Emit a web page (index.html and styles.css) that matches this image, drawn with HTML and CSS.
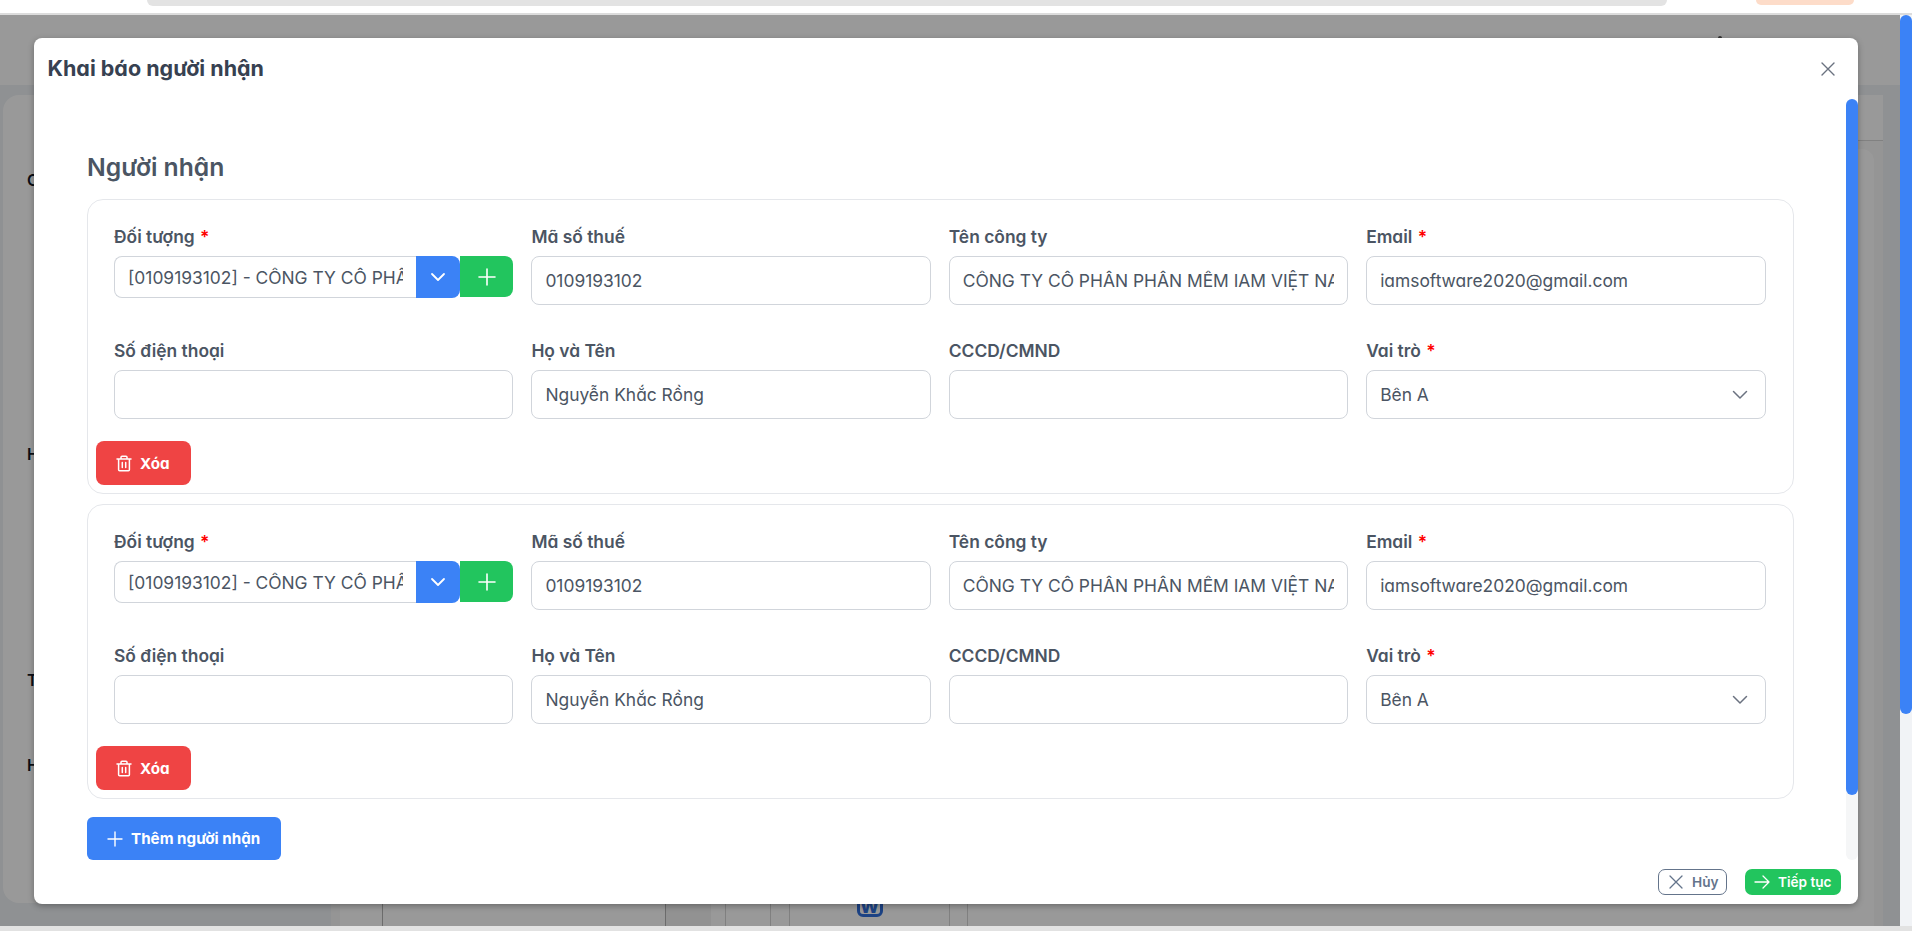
FILE: index.html
```html
<!DOCTYPE html>
<html lang="vi">
<head>
<meta charset="utf-8">
<title>Khai báo người nhận</title>
<link rel="stylesheet" href="styles.css">
</head>
<body>
<div class="topbar">
  <div class="top-pill"></div>
  <div class="top-action"></div>
</div>
<div class="viewport">
  <div class="scroller">
    <div class="page">
      <div class="page-header"><span class="header-dot"></span></div>
      <div class="page-grid">
        <aside class="side-card">
          <div class="side-label side-first">Công ty</div>
          <div class="side-label side-second">Họ tên</div>
          <div class="side-label side-third">Tên</div>
          <div class="side-label side-fourth">Hạn</div>
        </aside>
        <section class="doc-panel">
          <div class="doc-tabs"></div>
          <div class="doc-card">
            <div class="doc-row">
              <div class="cell c1"></div>
              <div class="cell c2"></div>
              <div class="cell c3"></div>
              <div class="cell c4"></div>
              <div class="cell c5"></div>
              <div class="cell c6"><span class="word-icon">W</span></div>
              <div class="cell c7"></div>
            </div>
          </div>
        </section>
      </div>
    </div>
  </div>
  <div class="scroll-track page-track"><div class="scroll-thumb page-thumb"></div></div>
  <div class="overlay">
    <div class="modal">
      <header class="modal-head">
        <h2 class="modal-title">Khai báo người nhận</h2>
        <button class="close-btn" type="button" aria-label="Đóng">
          <svg width="16" height="16" viewBox="0 0 16 16" fill="none" stroke="currentColor" stroke-width="1.4" stroke-linecap="round"><path d="M2 2l12 12M14 2L2 14"/></svg>
        </button>
      </header>
      <div class="modal-body">
        <h3 class="section-title">Người nhận</h3>

        <div class="card">
          <div class="fields">
            <div class="field">
              <label class="label">Đối tượng <span class="req">*</span></label>
              <div class="combo">
                <input class="combo-input" type="text" value="[0109193102] - CÔNG TY CỔ PHẦN PHẦN MỀM IAM VIỆT NAM">
                <button class="combo-toggle" type="button" aria-label="Chọn">
                  <svg width="16" height="16" viewBox="0 0 16 16" fill="none" stroke="currentColor" stroke-width="1.8" stroke-linecap="round" stroke-linejoin="round"><path d="M2 5l6 6 6-6"/></svg>
                </button>
                <button class="combo-add" type="button" aria-label="Thêm">
                  <svg width="18" height="18" viewBox="0 0 18 18" fill="none" stroke="currentColor" stroke-width="1.6" stroke-linecap="round"><path d="M9 1v16M1 9h16"/></svg>
                </button>
              </div>
            </div>
            <div class="field"><label class="label">Mã số thuế</label><input class="input" type="text" value="0109193102"></div>
            <div class="field"><label class="label">Tên công ty</label><input class="input" type="text" value="CÔNG TY CỔ PHẦN PHẦN MỀM IAM VIỆT NAM"></div>
            <div class="field"><label class="label">Email <span class="req">*</span></label><input class="input" type="text" value="iamsoftware2020@gmail.com"></div>
            <div class="field"><label class="label">Số điện thoại</label><input class="input" type="text" value=""></div>
            <div class="field"><label class="label">Họ và Tên</label><input class="input" type="text" value="Nguyễn Khắc Rồng"></div>
            <div class="field"><label class="label">CCCD/CMND</label><input class="input" type="text" value=""></div>
            <div class="field">
              <label class="label">Vai trò <span class="req">*</span></label>
              <div class="select"><span>Bên A</span>
                <svg width="16" height="16" viewBox="0 0 16 16" fill="none" stroke="currentColor" stroke-width="1.5" stroke-linecap="round" stroke-linejoin="round"><path d="M1.5 4.500L8 11l6.500-6.500"/></svg>
              </div>
            </div>
          </div>
          <button class="btn btn-delete" type="button">
            <svg width="16" height="17" viewBox="0 0 16 17" fill="none" stroke="currentColor" stroke-width="1.5" stroke-linecap="round" stroke-linejoin="round"><path d="M1 4h14M5 4V2.200A1 1 0 0 1 6 1.200h4a1 1 0 0 1 1 1V4M2.600 4v10.800a1 1 0 0 0 1 1h8.800a1 1 0 0 0 1-1V4M6.300 7.500v5M9.700 7.500v5"/></svg>
            Xóa
          </button>
        </div>

        <div class="card">
          <div class="fields">
            <div class="field">
              <label class="label">Đối tượng <span class="req">*</span></label>
              <div class="combo">
                <input class="combo-input" type="text" value="[0109193102] - CÔNG TY CỔ PHẦN PHẦN MỀM IAM VIỆT NAM">
                <button class="combo-toggle" type="button" aria-label="Chọn">
                  <svg width="16" height="16" viewBox="0 0 16 16" fill="none" stroke="currentColor" stroke-width="1.8" stroke-linecap="round" stroke-linejoin="round"><path d="M2 5l6 6 6-6"/></svg>
                </button>
                <button class="combo-add" type="button" aria-label="Thêm">
                  <svg width="18" height="18" viewBox="0 0 18 18" fill="none" stroke="currentColor" stroke-width="1.6" stroke-linecap="round"><path d="M9 1v16M1 9h16"/></svg>
                </button>
              </div>
            </div>
            <div class="field"><label class="label">Mã số thuế</label><input class="input" type="text" value="0109193102"></div>
            <div class="field"><label class="label">Tên công ty</label><input class="input" type="text" value="CÔNG TY CỔ PHẦN PHẦN MỀM IAM VIỆT NAM"></div>
            <div class="field"><label class="label">Email <span class="req">*</span></label><input class="input" type="text" value="iamsoftware2020@gmail.com"></div>
            <div class="field"><label class="label">Số điện thoại</label><input class="input" type="text" value=""></div>
            <div class="field"><label class="label">Họ và Tên</label><input class="input" type="text" value="Nguyễn Khắc Rồng"></div>
            <div class="field"><label class="label">CCCD/CMND</label><input class="input" type="text" value=""></div>
            <div class="field">
              <label class="label">Vai trò <span class="req">*</span></label>
              <div class="select"><span>Bên A</span>
                <svg width="16" height="16" viewBox="0 0 16 16" fill="none" stroke="currentColor" stroke-width="1.5" stroke-linecap="round" stroke-linejoin="round"><path d="M1.5 4.500L8 11l6.500-6.500"/></svg>
              </div>
            </div>
          </div>
          <button class="btn btn-delete" type="button">
            <svg width="16" height="17" viewBox="0 0 16 17" fill="none" stroke="currentColor" stroke-width="1.5" stroke-linecap="round" stroke-linejoin="round"><path d="M1 4h14M5 4V2.200A1 1 0 0 1 6 1.200h4a1 1 0 0 1 1 1V4M2.600 4v10.800a1 1 0 0 0 1 1h8.800a1 1 0 0 0 1-1V4M6.300 7.500v5M9.700 7.500v5"/></svg>
            Xóa
          </button>
        </div>

        <button class="btn btn-add" type="button">
          <svg width="16" height="16" viewBox="0 0 16 16" fill="none" stroke="currentColor" stroke-width="1.4" stroke-linecap="round"><path d="M8 1v14M1 8h14"/></svg>
          Thêm người nhận
        </button>
      </div>
      <footer class="modal-foot">
        <button class="btn-sm btn-cancel" type="button">
          <svg width="14" height="14" viewBox="0 0 14 14" fill="none" stroke="currentColor" stroke-width="1.3" stroke-linecap="round"><path d="M1 1l12 12M13 1L1 13"/></svg>
          Hủy
        </button>
        <button class="btn-sm btn-next" type="button">
          <svg width="16" height="14" viewBox="0 0 16 14" fill="none" stroke="currentColor" stroke-width="1.3" stroke-linecap="round" stroke-linejoin="round"><path d="M1 7h14M9 1l6 6-6 6"/></svg>
          Tiếp tục
        </button>
      </footer>
      <div class="scroll-track modal-track"><div class="scroll-thumb modal-thumb"></div></div>
    </div>
  </div>
</div>
<div class="bottom-strip"></div>
</body>
</html>
```

FILE: styles.css
```css
* { box-sizing: border-box; }
html, body { height: 100%; margin: 0; overflow: hidden; }
body {
  display: flex;
  flex-direction: column;
  font-family: Inter, "Noto Sans", sans-serif;
  font-feature-settings: "cv11" 1;
  color: #4b5563;
  background: #fff;
}
button, input { font: inherit; font-feature-settings: inherit; }

.topbar {
  flex: 0 0 15px;
  display: flex;
  align-items: flex-start;
  background: #fff;
  border-bottom: 2px solid #dcdcdc;
}
.top-pill {
  width: 1520px;
  height: 6px;
  margin-left: 147px;
  background: #e3e3e3;
  border-radius: 0 0 14px 14px;
}
.top-action {
  width: 98px;
  height: 5px;
  margin-left: 89px;
  background: #fddcc9;
  border-radius: 0 0 12px 12px;
}
.bottom-strip { flex: 0 0 5px; background: #e2e2e2; }

.viewport { position: relative; flex: 1; min-height: 0; }
.scroller { height: 100%; overflow: hidden; }

.scroll-track { position: absolute; width: 12px; }
.scroll-thumb { background: #3b82f6; border-radius: 6px; }
.page-track { top: 0; right: 0; bottom: 0; background: #f1f3f6; }
.page-thumb { height: 699px; }
.modal-track {
  top: 61px;
  right: 0;
  height: 761px;
  background: #f5f6f7;
  border-radius: 6px;
}
.modal-thumb { height: 696px; }

.page { height: 1187px; background: #eef2f6; }
.page-header { height: 70px; background: #fff; padding-top: 21px; }
.header-dot {
  display: block;
  width: 4px;
  height: 4px;
  margin-left: 1718px;
  border-radius: 50%;
  background: #555;
}
.page-grid {
  display: grid;
  grid-template-columns: 328px 1fr;
  margin-left: 3px;
  margin-right: 29px;
  padding-top: 10px;
}
.side-card {
  height: 808px;
  padding: 74px 0 0 24px;
  background: #fff;
  border-radius: 16px;
  display: flex;
  flex-direction: column;
}
.side-label { font-size: 16px; font-weight: 600; line-height: 22px; color: #111827; }
.side-second { margin-top: 252px; }
.side-third { margin-top: 204px; }
.side-fourth { margin-top: 63px; }

.doc-panel { background: #f8f8f8; }
.doc-tabs { height: 46px; background: #fff; border-bottom: 1px solid #d8d8d8; }
.doc-card {
  height: 1000px;
  margin: 8px 9px 0 9px;
  padding-top: 722px;
  background: #fff;
  border-radius: 12px 12px 0 0;
}
.doc-row { display: flex; height: 80px; }
.cell { border-right: 1px solid #d5d5d5; display: flex; justify-content: center; padding-top: 5px; }
.c1 { width: 43px; border-right-color: #b5b5b5; }
.c2 { width: 283px; border-right-color: #b5b5b5; }
.c3 { width: 60px; background: linear-gradient(to right, #f3f3f3 45px, #fff 45px); }
.c4 { width: 45px; }
.c5 { width: 19px; }
.c6 { width: 160px; }
.c7 { width: 18px; }
.word-icon {
  width: 26px;
  height: 28px;
  margin-top: 13px;
  border: 3px solid #2f6fdc;
  border-radius: 6px;
  color: #2f6fdc;
  font-size: 18px;
  font-weight: 800;
  line-height: 30px;
  text-align: center;
}

.overlay {
  position: absolute;
  inset: 0 12px 0 0;
  display: flex;
  padding: 23px 42px 22px 34px;
  background: rgba(0, 0, 0, 0.4);
}
.modal {
  position: relative;
  flex: 1;
  display: flex;
  flex-direction: column;
  min-width: 0;
  background: #fff;
  border-radius: 8px;
  box-shadow: 0 2px 6px rgba(0, 0, 0, 0.3);
  overflow: hidden;
}
.modal-head {
  flex: 0 0 61px;
  display: flex;
  justify-content: space-between;
  padding: 16px 22px 0 13.5px;
}
.modal-title {
  margin: 0;
  font-size: 21.5px;
  font-weight: 700;
  line-height: 28px;
  color: #374151;
}
.close-btn {
  width: 16px;
  height: 16px;
  margin-top: 7px;
  padding: 0;
  border: 0;
  background: none;
  color: #6b7280;
  display: flex;
}
.modal-body {
  height: 761px;
  flex: none;
  overflow: hidden;
  padding: 52px 64px 0 53px;
}
.section-title {
  margin: 0 0 16px;
  font-size: 24.7px;
  font-weight: 600;
  line-height: 32px;
  color: #4b5563;
}
.card {
  border: 1px solid #e5e7eb;
  border-radius: 16px;
  padding: 0 8px 8px;
  margin-bottom: 10px;
}
.fields {
  display: grid;
  grid-template-columns: repeat(4, 1fr);
  column-gap: 18px;
  row-gap: 34px;
  padding: 25px 19.5px 22px 18px;
}
.field { min-width: 0; }
.label {
  display: block;
  margin-bottom: 7px;
  font-size: 17.4px;
  font-weight: 600;
  line-height: 24px;
  color: #4b5563;
}
.req { color: #f00; margin-left: 1px; }
.input, .select {
  display: flex;
  align-items: center;
  width: 100%;
  height: 49px;
  padding: 0 13px;
  border: 1px solid #d1d5db;
  border-radius: 8px;
  background: #fff;
  color: #4b5563;
  font-size: 17.4px;
  outline: none;
}
.select { justify-content: space-between; }
.select svg { color: #6b7280; margin-right: 4px; }
.combo { display: flex; height: 42px; }
.combo-input {
  flex: 1;
  min-width: 0;
  padding: 0 13px;
  border: 1px solid #d1d5db;
  border-right: 0;
  border-radius: 8px 0 0 8px;
  color: #4b5563;
  font-size: 17.4px;
  outline: none;
}
.combo-toggle {
  flex: 0 0 44.6px;
  border: 0;
  padding: 0;
  background: #3b82f6;
  color: #fff;
  border-radius: 0 8px 8px 0;
  display: flex;
  align-items: center;
  justify-content: center;
}
.combo-add {
  flex: 0 0 53px;
  height: 41px;
  border: 0;
  padding: 0;
  background: #22c55e;
  color: #fff;
  border-radius: 0 8px 8px 0;
  display: flex;
  align-items: center;
  justify-content: center;
}
.btn {
  display: inline-flex;
  align-items: center;
  border: 0;
  color: #fff;
  font-size: 15.2px;
  font-weight: 700;
  border-radius: 6px;
}
.btn-delete {
  width: 95px;
  height: 44px;
  padding: 0 0 0 20px;
  gap: 8px;
  background: #ef4444;
  border-radius: 8px;
}
.btn-add {
  width: 194px;
  height: 43px;
  margin-top: 8px;
  padding: 0 0 0 20px;
  gap: 8px;
  background: #3b82f6;
}
.modal-foot {
  flex: 1;
  display: flex;
  justify-content: flex-end;
  align-items: flex-start;
  gap: 18px;
  padding: 9px 17px 0 0;
}
.btn-sm {
  display: inline-flex;
  align-items: center;
  height: 26px;
  border-radius: 7px;
  font-size: 13.6px;
  font-weight: 600;
}
.btn-cancel {
  width: 69px;
  padding: 0 0 0 10px;
  gap: 9px;
  border: 1px solid #64748b;
  background: #fff;
  color: #64748b;
}
.btn-next {
  width: 96px;
  padding: 0 0 0 9px;
  gap: 8px;
  border: 0;
  background: #22c55e;
  color: #fff;
}
```
